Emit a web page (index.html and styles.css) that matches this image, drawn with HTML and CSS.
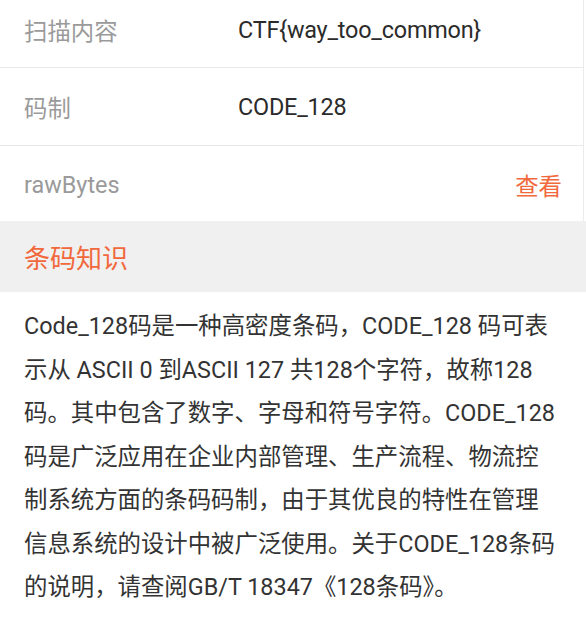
FILE: index.html
```html
<!DOCTYPE html>
<html lang="zh-CN">
<head>
<meta charset="utf-8">
<title>条码详情</title>
<link rel="stylesheet" href="styles.css">
</head>
<body>
<div class="info">
  <div class="row row-first">
    <span class="label">扫描内容</span>
    <span class="value">CTF{way_too_common}</span>
  </div>
  <div class="row">
    <span class="label">码制</span>
    <span class="value">CODE_128</span>
  </div>
  <div class="row row-last">
    <span class="label">rawBytes</span>
    <span class="action">查看</span>
  </div>
</div>
<div class="section-title">条码知识</div>
<div class="desc">
  <p>Code_128码是一种高密度条码，CODE_128 码可表<br>示从 ASCII 0 到ASCII 127 共128个字符，故称128<br>码。其中包含了数字、字母和符号字符。CODE_128<br>码是广泛应用在企业内部管理、生产流程、物流控<br>制系统方面的条码码制，由于其优良的特性在管理<br>信息系统的设计中被广泛使用。关于CODE_128条码<br>的说明，请查阅GB/T 18347《128条码》。</p>
</div>
</body>
</html>
```
FILE: styles.css
```css
html, body {
  margin: 0;
  padding: 0;
  background: #ffffff;
}
body {
  font-family: Roboto, "Noto Sans CJK SC", sans-serif;
  overflow: hidden;
}
.info {
  margin-right: 2px;
  border-right: 1px solid #ebebeb;
}
.row {
  box-sizing: border-box;
  display: flex;
  align-items: center;
  height: 78px;
  padding: 0 21px 0 24px;
  border-bottom: 1px solid #e8e8e8;
  font-size: 23.4px;
}
.row-first {
  height: 68px;
  padding-bottom: 7px;
}
.row-last {
  height: 75px;
  border-bottom: none;
  padding-top: 2px;
}
.label {
  width: 214px;
  flex: none;
  color: #9a9a9a;
}
.value {
  color: #2b2b2b;
  letter-spacing: -0.2px;
}
.action {
  margin-left: auto;
  color: #f1683c;
}
.section-title {
  box-sizing: border-box;
  height: 71px;
  display: flex;
  align-items: center;
  padding-left: 24px;
  background: #f0f0f0;
  font-size: 26px;
  color: #f1683c;
}
.desc {
  padding: 13px 24px 0 24px;
}
.desc p {
  margin: 0;
  font-size: 23.4px;
  line-height: 43.5px;
  color: #333333;
  white-space: nowrap;
}
```
